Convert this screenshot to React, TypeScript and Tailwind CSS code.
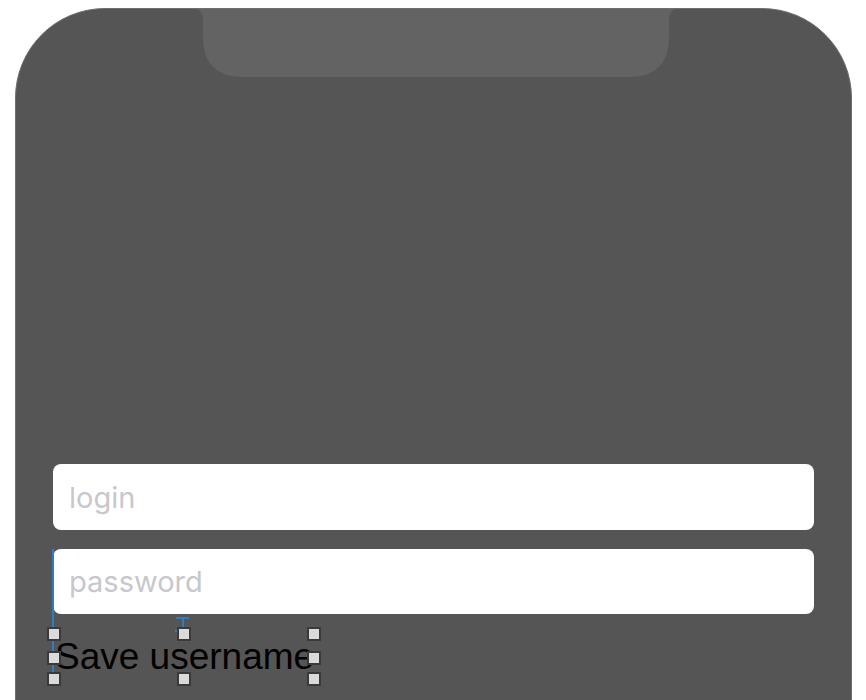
const Handle = ({ className }: { className: string }) => (
    <div className={`absolute w-[14px] h-[14px] bg-[#dadada] border-2 border-[#3a3a3a] ${className}`} />
);

export default function App() {
    return (
        <div className="w-[866px] h-[700px] bg-white overflow-hidden pl-[15px] pt-[8px]">
            <div className="relative w-[837px] h-[720px] rounded-t-[90px] bg-[#555555] border border-[#6e6e6e] overflow-hidden">
                {/* notch */}
                <svg className="absolute left-0 top-0" width="837" height="80" viewBox="0 0 837 80">
                    <path
                        d="M175 -1 Q187 -1 187 11 L187 28 Q187 68 227 68 L613 68 Q653 68 653 28 L653 11 Q653 -1 665 -1 Z"
                        fill="#636363"
                    />
                </svg>

                <div className="flex flex-col pt-[455px] px-[37px]" style={{ fontFamily: "Inter, 'Noto Sans', sans-serif" }}>
                    <input
                        placeholder="login"
                        className="h-[66px] w-full rounded-[8px] bg-white px-[16px] text-[29px] text-black placeholder:text-[#c7c7cd] outline-none"
                    />
                    <input
                        type="password"
                        placeholder="password"
                        className="mt-[19px] h-[65px] w-full rounded-[8px] bg-white px-[16px] text-[29px] text-black placeholder:text-[#c7c7cd] outline-none"
                    />

                    <div className="relative mt-[20px] w-[260px] h-[45px] ml-[1px]">
                        <span
                            className="block text-[37px] leading-[45px] text-black pl-[1px] whitespace-nowrap"
                            style={{ fontFamily: "'Liberation Sans', Arial, sans-serif" }}
                        >
                            Save username
                        </span>

                        {/* selection guides */}
                        <div className="absolute left-[-2px] top-[-85px] w-[2px] h-[123px] bg-[#2f7cc4]" />
                        <div className="absolute left-[122px] top-[-17px] w-[13px] h-[2px] bg-[#2f7cc4]" />
                        <div className="absolute left-[128px] top-[-17px] w-[2px] h-[11px] bg-[#2f7cc4]" />
                        <div className="absolute left-[121px] top-[-4px] w-[3px] h-[2px] bg-[#2f7cc4]" />

                        <Handle className="left-[-7px] top-[-7px]" />
                        <Handle className="left-[123px] top-[-7px]" />
                        <Handle className="left-[253px] top-[-7px]" />
                        <Handle className="left-[-7px] top-[17px]" />
                        <Handle className="left-[253px] top-[17px]" />
                        <Handle className="left-[-7px] top-[38px]" />
                        <Handle className="left-[123px] top-[38px]" />
                        <Handle className="left-[253px] top-[38px]" />
                    </div>
                </div>
            </div>
        </div>
    );
}
